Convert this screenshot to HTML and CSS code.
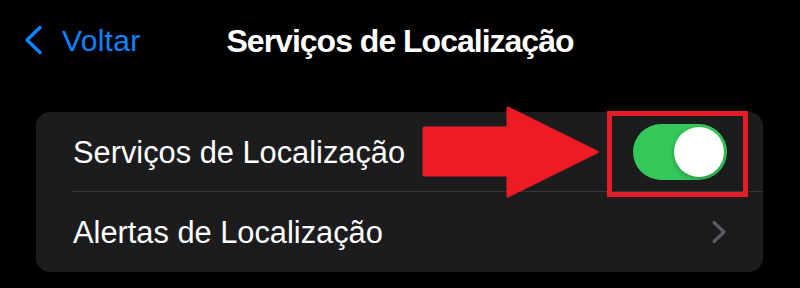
FILE: index.html
```html
<!DOCTYPE html>
<html lang="pt">
<head>
<meta charset="utf-8">
<title>Serviços de Localização</title>
<link rel="stylesheet" href="styles.css">
</head>
<body>
<div class="screen">
  <header class="nav">
    <a class="back" href="#">
      <svg class="back-icon" width="22" height="30" viewBox="0 0 22 30" aria-hidden="true">
        <path d="M18 2.5 L5 15 L18 27.5" fill="none" stroke="#0a84ff" stroke-width="3.4" stroke-linecap="round" stroke-linejoin="round"/>
      </svg>
      <span class="back-label">Voltar</span>
    </a>
    <h1 class="title">Serviços de Localização</h1>
    <div class="nav-spacer"></div>
  </header>

  <section class="card">
    <div class="row">
      <span class="row-label">Serviços de Localização</span>
      <span class="toggle on" role="switch" aria-checked="true"></span>
    </div>
    <div class="row row-sep">
      <span class="row-label">Alertas de Localização</span>
      <svg class="chevron" width="16" height="24" viewBox="0 0 16 24" aria-hidden="true">
        <path d="M3 2.5 L13 12 L3 21.5" fill="none" stroke="#5c5c60" stroke-width="3.2" stroke-linecap="round" stroke-linejoin="round"/>
      </svg>
    </div>
  </section>

  <svg class="arrow" width="178" height="92" viewBox="0 0 178 92" aria-hidden="true">
    <polygon points="2,22 86,22 86,2 175,46 86,90 86,69 2,69" fill="#ed1c24" stroke="#ed1c24" stroke-width="3" stroke-linejoin="round"/>
  </svg>
  <div class="highlight"></div>
</div>
</body>
</html>
```

FILE: styles.css
```css
* { box-sizing: border-box; }

html, body {
  margin: 0;
  padding: 0;
  background: #000;
}

body {
  font-family: "Liberation Sans", Arial, sans-serif;
  color: #fff;
}

.screen {
  position: relative;
  width: 800px;
  height: 288px;
  overflow: hidden;
  background: #000;
}

.nav {
  display: grid;
  grid-template-columns: 1fr auto 1fr;
  align-items: center;
  height: 80px;
}

.back {
  display: flex;
  align-items: center;
  gap: 18px;
  padding-left: 22px;
  color: #0a84ff;
  text-decoration: none;
}

.back-icon { display: block; }

.back-label {
  font-size: 30px;
  line-height: 1;
  letter-spacing: 0.3px;
  padding-top: 1px;
}

.title {
  margin: 0;
  font-size: 32px;
  font-weight: 700;
  line-height: 1;
  letter-spacing: -1px;
  padding-top: 2px;
}

.card {
  margin: 32px 37px 0 36px;
  background: #1c1c1e;
  border-radius: 14px;
  overflow: hidden;
}

.row {
  position: relative;
  display: flex;
  align-items: center;
  justify-content: space-between;
  height: 79px;
  padding: 0 36px 0 37px;
}

.row-sep {
  height: 81px;
}

.row-sep::before {
  content: "";
  position: absolute;
  left: 36px;
  right: 0;
  top: 0;
  height: 1px;
  background: #38383a;
}

.row-label {
  font-size: 30.8px;
  line-height: 1;
  padding-top: 4px;
}

.toggle {
  position: relative;
  display: block;
  width: 94px;
  height: 56px;
  border-radius: 28px;
  background: #34c759;
}

.toggle::after {
  content: "";
  position: absolute;
  top: 3px;
  right: 3px;
  width: 50px;
  height: 50px;
  border-radius: 50%;
  background: #fff;
  box-shadow: 0 2px 5px rgba(0, 0, 0, 0.25);
}

.chevron {
  display: block;
}

.arrow {
  position: absolute;
  left: 422px;
  top: 106px;
}

.highlight {
  position: absolute;
  left: 607px;
  top: 111px;
  width: 141px;
  height: 86px;
  border: 5px solid #e41e26;
}
```
